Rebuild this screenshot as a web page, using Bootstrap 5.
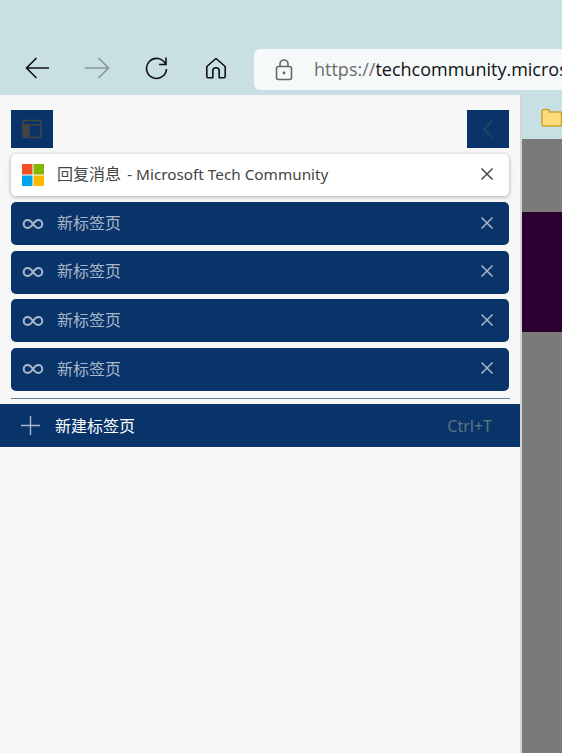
<!DOCTYPE html>
<html lang="zh">
<head>
  <meta charset="UTF-8" />
  <meta name="viewport" content="width=device-width, initial-scale=1" />
  <title>回复消息 - Microsoft Tech Community</title>
  <link href="https://cdn.jsdelivr.net/npm/bootstrap@5.3.0/dist/css/bootstrap.min.css" rel="stylesheet" />
  <style>
    html, body { height: 100%; }
    body { overflow: hidden; background: #7a7a7a; font-family: "Noto Sans", "Noto Sans CJK SC", sans-serif; font-size: 16px; }
    .top-bar { height: 95px; background: #c8dfe3; padding: 49px 0 5px 14px; }
    .tool-btn { width: 48px; height: 38px; margin-right: 11px; flex: none; }
    .tool-btn.home-btn { margin-left: 1px; margin-right: 0; }
    .addr-box { height: 41px; background: #f5f9fa; border-radius: 6px 0 0 6px; padding-left: 21px; margin-left: 14px; min-width: 0; white-space: nowrap; overflow: hidden; font-family: "Open Sans", sans-serif; font-size: 18px; color: #111; }
    .addr-box .scheme { color: #6c6c6c; margin-left: 21px; }
    .main-wrap { height: 658px; }
    .side-panel { width: 520px; flex: none; background: #f7f7f7; padding-top: 15px; }
    .side-edge { width: 2px; background: #d4d4d4; flex: none; }
    .side-head { height: 38px; padding: 0 11px; margin-bottom: 6px; }
    .head-btn { width: 42px; height: 38px; background: #09346a; }
    .tab-list { padding: 0 11px 0; }
    .tab-item { height: 43px; margin-bottom: 5.67px; background: #09346a; color: #a9b7c9; border-radius: 5px; padding: 0 15px 0 11px; line-height: 1; }
    .tab-item.tab-on { height: 42px; margin-bottom: 6px; background: #fff; color: #444; box-shadow: 0 1px 4px rgba(0, 0, 0, .3); }
    .tab-icon { width: 22px; flex: none; margin-right: 13px; }
    .tab-text { margin-bottom: 1.5px; }
    .tab-close { margin-bottom: 2px; }
    .lat-text { font-size: 15.3px; margin-left: 2px; }
    .tab-sep { height: 1px; background: #5d80a8; margin: 7px 10px 5px 11px; }
    .new-row { height: 43px; background: #09346a; color: #fff; padding: 0 28px 0 21px; }
    .new-row .plus-icon { margin-right: 15px; }
    .new-row .new-text { margin-top: 2px; }
    .new-row .key { color: #5f7480; margin-top: 2px; }
    .page-side { min-width: 0; }
    .fav-strip { height: 44px; background: #c8dfe3; padding: 9px 0 0 19px; }
    .page-gray { height: 73px; background: #7a7a7a; }
    .page-dark { height: 120px; background: #2b0030; }
  </style>
</head>
<body>
  <div class="top-bar d-flex">
    <div class="tool-btn d-flex align-items-center justify-content-center">
      <svg width="26" height="24" viewBox="0 0 26 24" fill="none" stroke="#111" stroke-width="1.6"><path d="M1.5 12H24M11.5 2 1.5 12l10 10"/></svg>
    </div>
    <div class="tool-btn d-flex align-items-center justify-content-center">
      <svg width="26" height="24" viewBox="0 0 26 24" fill="none" stroke="#85959b" stroke-width="1.6"><path d="M1 12h23M14.500 2l10 10-10 10"/></svg>
    </div>
    <div class="tool-btn d-flex align-items-center justify-content-center">
      <svg width="24" height="24" viewBox="0 0 24 24" fill="none" stroke="#111" stroke-width="1.6"><path d="M21.500 8A10 10 0 1 0 22.500 13M22 1.500V8.500H15"/></svg>
    </div>
    <div class="tool-btn home-btn d-flex align-items-center justify-content-center">
      <svg width="22" height="22" viewBox="0 0 22 22" fill="none" stroke="#111" stroke-width="1.6" stroke-linejoin="round"><path d="M11 1.500 1.800 9.500V19.500A1.200 1.200 0 0 0 3 20.700H7.800V14A3.200 3.200 0 0 1 14.200 14V20.700H19A1.200 1.200 0 0 0 20.200 19.500V9.500Z"/></svg>
    </div>
    <div class="addr-box flex-grow-1 d-flex align-items-center">
      <svg class="flex-shrink-0" width="18" height="22" viewBox="0 0 18 22" fill="none" stroke="#666" stroke-width="1.6"><rect x="1.500" y="7.500" width="15" height="13" rx="2"/><path d="M5 7.500V5a4 4 0 0 1 8 0v2.500"/><circle cx="9" cy="14" r="1.400" fill="#666" stroke="none"/></svg>
      <span class="scheme">https://</span><span>techcommunity.micros</span>
    </div>
  </div>

  <div class="main-wrap d-flex">
    <div class="side-panel">
      <div class="side-head d-flex justify-content-between">
        <div class="head-btn d-flex align-items-center justify-content-center">
          <svg width="20" height="20" viewBox="0 0 20 20" fill="none" stroke="#444" stroke-width="1.600"><rect x="1" y="1.500" width="18" height="17" rx="2.500"/><path d="M1 6h18"/><path d="M1.500 6H7v12H3a1.500 1.500 0 0 1-1.500-1.500Z" fill="#444"/></svg>
        </div>
        <div class="head-btn d-flex align-items-center justify-content-center">
          <svg width="12" height="18" viewBox="0 0 12 18" fill="none" stroke="#3a4a5e" stroke-width="1.300"><path d="M10 1 2 9l8 8"/></svg>
        </div>
      </div>

      <div class="tab-list">
        <div class="tab-item tab-on d-flex align-items-center">
          <svg class="tab-icon" width="22" height="22" viewBox="0 0 22 22"><rect width="10.500" height="10.500" fill="#f25022"/><rect x="11.500" width="10.500" height="10.500" fill="#7fba00"/><rect y="11.500" width="10.500" height="10.500" fill="#00a4ef"/><rect x="11.500" y="11.500" width="10.500" height="10.500" fill="#ffb900"/></svg>
          <span class="tab-text flex-grow-1">回复消息 <span class="lat-text">- Microsoft Tech Community</span></span>
          <svg class="tab-close" width="14" height="14" viewBox="0 0 14 14" fill="none" stroke="#444" stroke-width="1.500"><path d="M1.500 1.500l11 11M12.500 1.500l-11 11"/></svg>
        </div>
        <div class="tab-item d-flex align-items-center">
          <svg class="tab-icon" width="22" height="12" viewBox="0 0 22 12" fill="none" stroke="#a9b7c9" stroke-width="2"><path d="M11 6C9 3.200 7.500 2 5.700 2a4 4 0 0 0 0 8C7.500 10 9 8.800 11 6c2-2.800 3.500-4 5.300-4a4 4 0 0 1 0 8C14.500 10 13 8.800 11 6Z"/></svg>
          <span class="tab-text flex-grow-1">新标签页</span>
          <svg class="tab-close" width="14" height="14" viewBox="0 0 14 14" fill="none" stroke="#a9b7c9" stroke-width="1.500"><path d="M1.500 1.500l11 11M12.500 1.500l-11 11"/></svg>
        </div>
        <div class="tab-item d-flex align-items-center">
          <svg class="tab-icon" width="22" height="12" viewBox="0 0 22 12" fill="none" stroke="#a9b7c9" stroke-width="2"><path d="M11 6C9 3.200 7.500 2 5.700 2a4 4 0 0 0 0 8C7.500 10 9 8.800 11 6c2-2.800 3.500-4 5.300-4a4 4 0 0 1 0 8C14.500 10 13 8.800 11 6Z"/></svg>
          <span class="tab-text flex-grow-1">新标签页</span>
          <svg class="tab-close" width="14" height="14" viewBox="0 0 14 14" fill="none" stroke="#a9b7c9" stroke-width="1.500"><path d="M1.500 1.500l11 11M12.500 1.500l-11 11"/></svg>
        </div>
        <div class="tab-item d-flex align-items-center">
          <svg class="tab-icon" width="22" height="12" viewBox="0 0 22 12" fill="none" stroke="#a9b7c9" stroke-width="2"><path d="M11 6C9 3.200 7.500 2 5.700 2a4 4 0 0 0 0 8C7.500 10 9 8.800 11 6c2-2.800 3.500-4 5.300-4a4 4 0 0 1 0 8C14.500 10 13 8.800 11 6Z"/></svg>
          <span class="tab-text flex-grow-1">新标签页</span>
          <svg class="tab-close" width="14" height="14" viewBox="0 0 14 14" fill="none" stroke="#a9b7c9" stroke-width="1.500"><path d="M1.500 1.500l11 11M12.500 1.500l-11 11"/></svg>
        </div>
        <div class="tab-item d-flex align-items-center">
          <svg class="tab-icon" width="22" height="12" viewBox="0 0 22 12" fill="none" stroke="#a9b7c9" stroke-width="2"><path d="M11 6C9 3.200 7.500 2 5.700 2a4 4 0 0 0 0 8C7.500 10 9 8.800 11 6c2-2.800 3.500-4 5.300-4a4 4 0 0 1 0 8C14.500 10 13 8.800 11 6Z"/></svg>
          <span class="tab-text flex-grow-1">新标签页</span>
          <svg class="tab-close" width="14" height="14" viewBox="0 0 14 14" fill="none" stroke="#a9b7c9" stroke-width="1.500"><path d="M1.500 1.500l11 11M12.500 1.500l-11 11"/></svg>
        </div>
      </div>

      <div class="tab-sep"></div>
      <div class="new-row d-flex align-items-center">
        <svg class="plus-icon flex-shrink-0" width="19" height="19" viewBox="0 0 19 19" fill="none" stroke="#a9b7c9" stroke-width="1.400"><path d="M9.500 0v19M0 9.500h19"/></svg>
        <span class="new-text flex-grow-1">新建标签页</span>
        <span class="key">Ctrl+T</span>
      </div>
    </div>
    <div class="side-edge"></div>
    <div class="page-side flex-grow-1">
      <div class="fav-strip">
        <svg width="21" height="19" viewBox="0 0 21 19"><path d="M1 3.500A2 2 0 0 1 3 1.500h3.500a2 2 0 0 1 2 2V4H19a1.500 1.500 0 0 1 1.500 1.500v11A1.500 1.500 0 0 1 19 18H3a2 2 0 0 1-2-2Z" fill="#ffdc7a" stroke="#c9a227" stroke-width="1.500"/></svg>
      </div>
      <div class="page-gray"></div>
      <div class="page-dark"></div>
    </div>
  </div>

  <script src="https://cdn.jsdelivr.net/npm/bootstrap@5.3.0/dist/js/bootstrap.bundle.min.js"></script>
</body>
</html>
